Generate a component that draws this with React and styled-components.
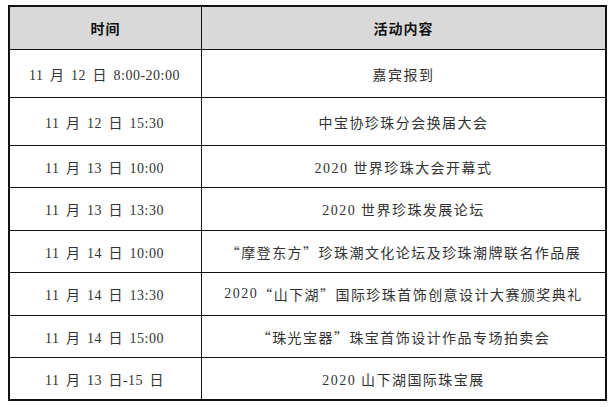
import React from 'react'
import styled, { createGlobalStyle } from 'styled-components'

const GlobalStyle = createGlobalStyle`
  body {
    margin: 0;
    background: #fff;
    font-family: "Liberation Serif", "Noto Sans CJK SC", serif;
  }
`

const Table = styled.div`
  box-sizing: border-box;
  width: 599px;
  margin: 5px 0 0 8px;
  border: 2px solid #111;
`

const Row = styled.div`
  box-sizing: border-box;
  display: grid;
  grid-template-columns: 192px 1fr;
  height: ${p => p.h}px;
  border-top: ${p => (p.first ? 'none' : '1px solid #111')};
  background: ${p => (p.head ? '#d9d9d9' : '#fff')};
`

const Cell = styled.div`
  box-sizing: border-box;
  display: flex;
  align-items: center;
  justify-content: center;
  font-size: 14px;
  color: #333;
  white-space: pre;
  &:first-child {
    border-right: 1px solid #111;
  }
`

const TimeCell = styled(Cell)`
  padding-right: 2px;
  word-spacing: 2.5px;
  letter-spacing: 0.5px;
`

const EventCell = styled(Cell)`
  letter-spacing: 1.45px;
`

const Quote = styled.span`
  font-family: "Noto Sans CJK SC", sans-serif;
`

const HeadCell = styled(Cell)`
  font-family: "Noto Sans CJK SC", sans-serif;
  font-weight: 700;
  font-size: 14px;
  color: #111;
  letter-spacing: 1px;
`

const rows = [
  { time: '11 月 12 日 8:00-20:00', event: '嘉宾报到', h: 48 },
  { time: '11 月 12 日 15:30', event: '中宝协珍珠分会换届大会', h: 48 },
  { time: '11 月 13 日 10:00', event: '2020 世界珍珠大会开幕式', h: 42 },
  { time: '11 月 13 日 13:30', event: '2020 世界珍珠发展论坛', h: 43 },
  { time: '11 月 14 日 10:00', event: '“摩登东方”珍珠潮文化论坛及珍珠潮牌联名作品展', h: 42 },
  { time: '11 月 14 日 13:30', event: '2020“山下湖”国际珍珠首饰创意设计大赛颁奖典礼', h: 43 },
  { time: '11 月 14 日 15:00', event: '“珠光宝器”珠宝首饰设计作品专场拍卖会', h: 42 },
  { time: '11 月 13 日-15 日', event: '2020 山下湖国际珠宝展', h: 42 },
]

// wrap curly quotes so they take a full CJK cell, as in the source
const withQuotes = text =>
  text.split(/([“”])/).map((part, i) =>
    part === '“' || part === '”' ? <Quote key={i}>{part}</Quote> : part
  )

export default function App() {
  return (
    <>
      <GlobalStyle />
      <Table>
        <Row first head h={42}>
          <HeadCell>时间</HeadCell>
          <HeadCell>活动内容</HeadCell>
        </Row>
        {rows.map(r => (
          <Row key={r.time + r.event} h={r.h}>
            <TimeCell>{r.time}</TimeCell>
            <EventCell>{withQuotes(r.event)}</EventCell>
          </Row>
        ))}
      </Table>
    </>
  )
}
